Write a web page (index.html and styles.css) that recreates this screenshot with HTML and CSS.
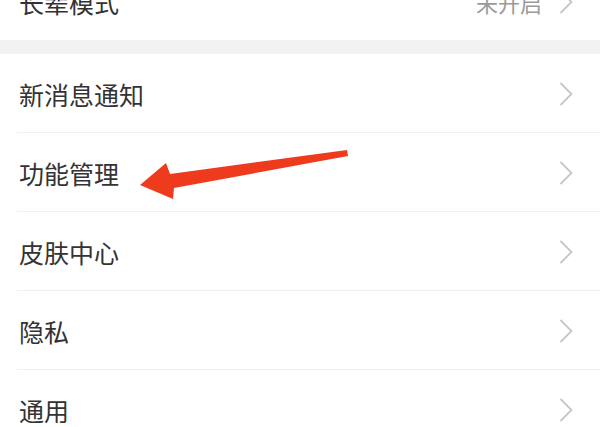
FILE: index.html
```html
<!DOCTYPE html>
<html lang="zh-CN">
<head>
  <meta charset="UTF-8" />
  <title>设置</title>
  <meta name="viewport" content="width=device-width, initial-scale=1.0" />
  <link rel="stylesheet" href="styles.css">
</head>
<body>
  <!-- Top group (scrolled, partly hidden) -->
  <div class="group group-top">
    <div class="row">
      <span class="label">长辈模式</span>
      <span class="value">未开启</span>
      <svg class="chev" viewBox="0 0 14 24"><polyline points="1.5,1 12.5,12 1.5,23" /></svg>
    </div>
  </div>

  <div class="gap"></div>

  <!-- Settings list -->
  <div class="group">
    <div class="row">
      <span class="label">新消息通知</span>
      <svg class="chev" viewBox="0 0 14 24"><polyline points="1.5,1 12.5,12 1.5,23" /></svg>
    </div>
    <div class="row">
      <span class="label">功能管理</span>
      <svg class="chev" viewBox="0 0 14 24"><polyline points="1.5,1 12.5,12 1.5,23" /></svg>
    </div>
    <div class="row">
      <span class="label">皮肤中心</span>
      <svg class="chev" viewBox="0 0 14 24"><polyline points="1.5,1 12.5,12 1.5,23" /></svg>
    </div>
    <div class="row">
      <span class="label">隐私</span>
      <svg class="chev" viewBox="0 0 14 24"><polyline points="1.5,1 12.5,12 1.5,23" /></svg>
    </div>
    <div class="row">
      <span class="label">通用</span>
      <svg class="chev" viewBox="0 0 14 24"><polyline points="1.5,1 12.5,12 1.5,23" /></svg>
    </div>
  </div>

  <!-- Annotation arrow -->
  <svg class="arrow" viewBox="0 0 600 427">
    <polygon points="140,185 166,163 170,174 347,150 348,156 174,188 173,199" />
  </svg>
</body>
</html>
```

FILE: styles.css
```css
/* ===== Basic Styles ===== */
body {
  margin: 0;
  height: 427px;
  overflow: hidden;
  position: relative;
  background: #ffffff;
  font-family: "Noto Sans CJK SC", "Noto Sans", sans-serif;
  color: #333333;
}
.group {
  background: #ffffff;
}
.group-top {
  margin-top: -39px;
}
.gap {
  height: 14px;
  background: #f2f2f2;
}
.row {
  display: flex;
  align-items: center;
  box-sizing: border-box;
  height: 79px;
  margin-left: 17px;
  padding: 2px 27px 0 2px;
  border-bottom: 1px solid #f0f0f0;
}
.group-top .row {
  border-bottom: none;
}
.label {
  flex: 1;
  font-size: 25px;
  color: #333333;
}
.value {
  font-size: 22px;
  color: #9a9a9a;
  margin-right: 17px;
}
.chev {
  width: 14px;
  height: 24px;
}
.chev polyline {
  fill: none;
  stroke: #c6c6c6;
  stroke-width: 1.8;
}
.arrow {
  position: absolute;
  left: 0;
  top: 0;
  width: 600px;
  height: 427px;
}
.arrow polygon {
  fill: #ee3b1d;
}
```
